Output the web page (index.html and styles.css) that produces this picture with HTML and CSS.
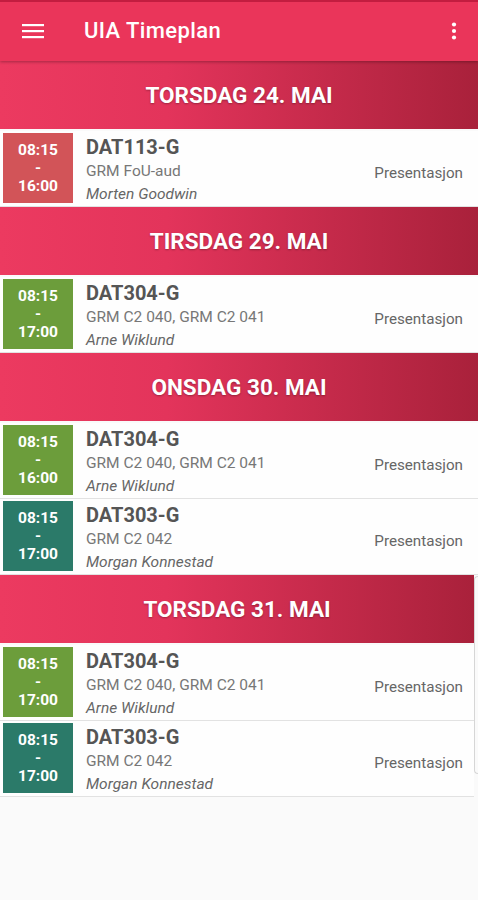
FILE: index.html
```html
<!DOCTYPE html>
<html lang="no">
<head>
  <meta charset="UTF-8" />
  <meta name="viewport" content="width=device-width, initial-scale=1" />
  <title>UIA Timeplan</title>
  <link rel="stylesheet" href="styles.css">
</head>
<body>
  <!-- TOPPLINJE -->
  <div class="toolbar">
    <svg class="menu" width="22" height="16" viewBox="0 0 22 16">
      <rect x="0" y="1" width="22" height="2.2" fill="#fff"/>
      <rect x="0" y="7" width="22" height="2.2" fill="#fff"/>
      <rect x="0" y="13" width="22" height="2.2" fill="#fff"/>
    </svg>
    <div class="app-title">UIA Timeplan</div>
    <svg class="more" width="6" height="18" viewBox="0 0 6 18">
      <circle cx="3" cy="2.5" r="2.1" fill="#fff"/>
      <circle cx="3" cy="9" r="2.1" fill="#fff"/>
      <circle cx="3" cy="15.5" r="2.1" fill="#fff"/>
    </svg>
  </div>

  <!-- DAGER -->
  <div class="day">
    <div class="day-head">TORSDAG 24. MAI</div>
    <div class="lessons">
      <div class="lesson">
        <div class="time red">08:15<br>-<br>16:00</div>
        <div class="info">
          <div class="course">DAT113-G</div>
          <div class="room">GRM FoU-aud</div>
          <div class="teacher">Morten Goodwin</div>
        </div>
        <div class="kind">Presentasjon</div>
      </div>
    </div>
  </div>

  <div class="day">
    <div class="day-head">TIRSDAG 29. MAI</div>
    <div class="lessons">
      <div class="lesson">
        <div class="time green">08:15<br>-<br>17:00</div>
        <div class="info">
          <div class="course">DAT304-G</div>
          <div class="room">GRM C2 040, GRM C2 041</div>
          <div class="teacher">Arne Wiklund</div>
        </div>
        <div class="kind">Presentasjon</div>
      </div>
    </div>
  </div>

  <div class="day">
    <div class="day-head">ONSDAG 30. MAI</div>
    <div class="lessons">
      <div class="lesson">
        <div class="time green">08:15<br>-<br>16:00</div>
        <div class="info">
          <div class="course">DAT304-G</div>
          <div class="room">GRM C2 040, GRM C2 041</div>
          <div class="teacher">Arne Wiklund</div>
        </div>
        <div class="kind">Presentasjon</div>
      </div>
      <div class="lesson">
        <div class="time teal">08:15<br>-<br>17:00</div>
        <div class="info">
          <div class="course">DAT303-G</div>
          <div class="room">GRM C2 042</div>
          <div class="teacher">Morgan Konnestad</div>
        </div>
        <div class="kind">Presentasjon</div>
      </div>
    </div>
  </div>

  <div class="day last">
    <div class="day-body">
      <div class="day-head">TORSDAG 31. MAI</div>
      <div class="lessons">
        <div class="lesson">
          <div class="time green">08:15<br>-<br>17:00</div>
          <div class="info">
            <div class="course">DAT304-G</div>
            <div class="room">GRM C2 040, GRM C2 041</div>
            <div class="teacher">Arne Wiklund</div>
          </div>
          <div class="kind">Presentasjon</div>
        </div>
        <div class="lesson">
          <div class="time teal">08:15<br>-<br>17:00</div>
          <div class="info">
            <div class="course">DAT303-G</div>
            <div class="room">GRM C2 042</div>
            <div class="teacher">Morgan Konnestad</div>
          </div>
          <div class="kind">Presentasjon</div>
        </div>
      </div>
    </div>
    <div class="edge"></div>
  </div>
</body>
</html>
```

FILE: styles.css
```css
body {
  margin: 0;
  background: #fafafa;
  font-family: Roboto, "Liberation Sans", sans-serif;
}
.toolbar {
  height: 59px;
  border-top: 2px solid #c21d40;
  background: #ea355a;
  display: flex;
  align-items: center;
  padding: 0 22px;
  box-shadow: 0 1px 3px rgba(0, 0, 0, 0.3);
  position: relative;
}
.menu {
  display: block;
  margin-top: -2px;
}
.app-title {
  color: #fff;
  font-size: 22px;
  font-weight: 500;
  letter-spacing: 0.4px;
  margin-left: 40px;
  flex: 1;
  margin-top: -2px;
}
.more {
  display: block;
  margin-right: -1px;
  margin-top: -2px;
}
.day-head {
  height: 68px;
  display: flex;
  align-items: center;
  justify-content: center;
  color: #fff;
  font-size: 22.5px;
  font-weight: bold;
  text-shadow: 0 1px 2px rgba(0, 0, 0, 0.3);
  background: linear-gradient(90deg, #ec3a60 0%, #e3345b 35%, #a9213b 100%);
}
.lessons {
  padding-top: 2px;
}
.lesson {
  display: flex;
  align-items: center;
  height: 70px;
  padding: 2px 3px 3px;
  background: #fefefe;
  border-bottom: 1px solid #e2e2e2;
}
.time {
  width: 70px;
  height: 70px;
  color: #fff;
  font-size: 15.5px;
  font-weight: bold;
  line-height: 18px;
  text-align: center;
  display: flex;
  align-items: center;
  justify-content: center;
}
.red {
  background: #d25458;
}
.green {
  background: #6c9d3b;
}
.teal {
  background: #2b7a69;
}
.info {
  flex: 1;
  margin-left: 13px;
  margin-top: 4px;
  color: #666;
}
.course {
  font-size: 20px;
  font-weight: bold;
  color: #555;
  line-height: 24px;
}
.room {
  font-size: 15.5px;
  line-height: 25px;
  color: #777;
}
.teacher {
  font-size: 15.5px;
  font-style: italic;
  line-height: 21px;
  color: #666;
}
.kind {
  font-size: 15.2px;
  color: #666;
  margin-right: 12px;
  margin-top: 10px;
}
.day.last {
  display: flex;
}
.day-body {
  flex: 1;
}
.day.last .kind {
  margin-right: 8px;
}
.edge {
  width: 3px;
  margin: 1px 0 23px;
  border: 1px solid #d6d6d6;
  border-right: none;
  border-radius: 4px 0 0 4px;
  background: #fafafa;
}
```
